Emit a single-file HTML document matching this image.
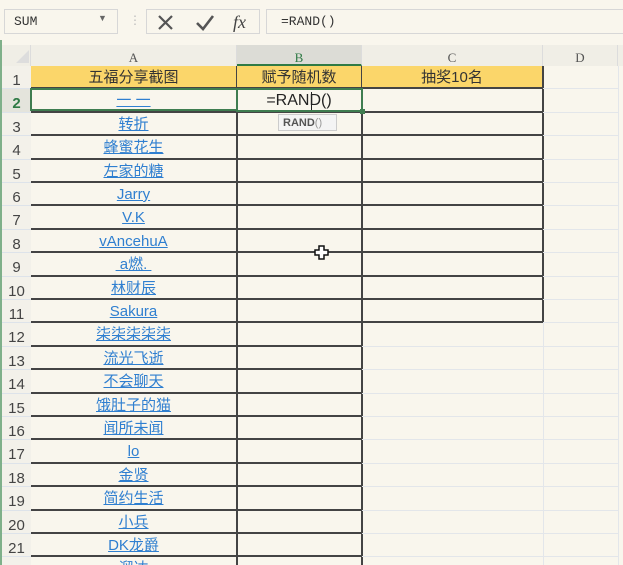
<!DOCTYPE html>
<html><head><meta charset="utf-8"><style>
html,body{margin:0;width:623px;height:565px;overflow:hidden}
body{background:#f9f6ed;font-family:"Liberation Sans","Noto Sans CJK SC",sans-serif;position:relative}
.box{position:absolute;top:9px;height:25px;border:1px solid #d7d7d7;background:#f9f6ed;box-sizing:border-box}
.mono{font-family:"Liberation Mono","Noto Sans CJK SC",monospace;font-size:13px;color:#333}
#grid{position:absolute;left:0;top:45px;width:623px}
.hdr{position:absolute;top:0;height:21px;background:#f0eee6;border-right:1px solid #dcdcdc;box-sizing:border-box;text-align:center;font-family:"Liberation Serif",serif;font-size:13px;color:#555;line-height:26px}
.row{position:absolute;left:0;width:623px;height:23.4px}
.rn{position:absolute;left:2px;width:29px;height:100%;text-align:center;color:#444;font-size:15px;line-height:29px;border-bottom:1px solid #dde3ea;box-sizing:border-box;background:#f3f1ea}
.c{position:absolute;top:0;height:100%;box-sizing:border-box;text-align:center;font-size:15px;line-height:24px}
.a{left:31px;width:207px;border-bottom:2px solid #444;border-right:2px solid #444}
.b{left:237px;width:126px;border-bottom:2px solid #444;border-right:2px solid #444}
.cc{left:362px;width:182px;border-bottom:2px solid #444;border-right:2px solid #444}
.cl{left:362px;width:182px;border-bottom:1px solid #e3e6ea;border-right:1px solid #e3e6ea}
.d{left:543px;width:76px;border-bottom:1px solid #e3e6ea;border-right:1px solid #e3e6ea}
.y{background:#fbd66a;color:#333}
.l{color:#2f7fd0;text-decoration:underline}
</style></head><body>
<div style="position:absolute;left:0;top:40px;width:2px;height:525px;background:#7fb08a"></div>
<div class="box" style="left:4px;width:114px"><span class="mono" style="position:absolute;left:9px;top:4px">SUM</span><span style="position:absolute;left:93px;top:3px;font-size:9px;color:#666">▼</span></div>
<div style="position:absolute;left:129px;top:13px;font-size:12px;color:#bbb">⋮</div>
<div class="box" style="left:146px;width:114px">
<svg width="114" height="25" style="position:absolute;left:0;top:0"><path d="M12 6 L25 19 M25 6 L12 19" stroke="#555" stroke-width="2.2"/><path d="M50 13 L56 19 L66 6" stroke="#555" stroke-width="2.6" fill="none"/><text x="86" y="18" font-family="Liberation Serif" font-style="italic" font-size="18" fill="#444">fx</text></svg></div>
<div class="box" style="left:266px;width:360px"><span class="mono" style="position:absolute;left:14px;top:4px">=RAND()</span></div>
<div id="grid">
<div class="hdr" style="left:2px;width:29px"><svg width="29" height="21"><path d="M14 18 L27 18 L27 5Z" fill="#ddd"/></svg></div>
<div class="hdr" style="left:31px;width:206px">A</div>
<div class="hdr" style="left:237px;width:125px;background:#dcdcd6;color:#2f7a45;border-bottom:2px solid #2f7a45">B</div>
<div class="hdr" style="left:362px;width:181px">C</div>
<div class="hdr" style="left:543px;width:75px">D</div>
<div class="hdr" style="left:618px;width:10px"></div>
</div>
<div id="rows" style="position:absolute;left:0;top:66px">
<div class="row" style="top:0"><div class="rn">1</div><div class="c a y">五福分享截图</div><div class="c b y">赋予随机数</div><div class="c cc y">抽奖10名</div><div class="c d"></div></div>
<div class="row" style="top:23.4px"><div class="rn" style="color:#2f7a45;font-weight:bold;background:#e4e4dc">2</div><div class="c a l">一 一</div><div class="c b" style="font-size:16px;color:#222">=RAND()</div><div class="c cc"></div><div class="c d"></div></div>
<div class="row" style="top:46.8px"><div class="rn">3</div><div class="c a l">转折</div><div class="c b"></div><div class="c cc"></div><div class="c d"></div></div>
<div class="row" style="top:70.2px"><div class="rn">4</div><div class="c a l">蜂蜜花生</div><div class="c b"></div><div class="c cc"></div><div class="c d"></div></div>
<div class="row" style="top:93.6px"><div class="rn">5</div><div class="c a l">左家的糖</div><div class="c b"></div><div class="c cc"></div><div class="c d"></div></div>
<div class="row" style="top:117px"><div class="rn">6</div><div class="c a l">Jarry</div><div class="c b"></div><div class="c cc"></div><div class="c d"></div></div>
<div class="row" style="top:140.4px"><div class="rn">7</div><div class="c a l">V.K</div><div class="c b"></div><div class="c cc"></div><div class="c d"></div></div>
<div class="row" style="top:163.8px"><div class="rn">8</div><div class="c a l">vAncehuA</div><div class="c b"></div><div class="c cc"></div><div class="c d"></div></div>
<div class="row" style="top:187.2px"><div class="rn">9</div><div class="c a l">&nbsp;a燃.&nbsp;</div><div class="c b"></div><div class="c cc"></div><div class="c d"></div></div>
<div class="row" style="top:210.6px"><div class="rn">10</div><div class="c a l">林财辰</div><div class="c b"></div><div class="c cc"></div><div class="c d"></div></div>
<div class="row" style="top:234px"><div class="rn">11</div><div class="c a l">Sakura</div><div class="c b"></div><div class="c cc"></div><div class="c d"></div></div>
<div class="row" style="top:257.4px"><div class="rn">12</div><div class="c a l">柒柒柒柒柒</div><div class="c b"></div><div class="c cl"></div><div class="c d"></div></div>
<div class="row" style="top:280.8px"><div class="rn">13</div><div class="c a l">流光飞逝</div><div class="c b"></div><div class="c cl"></div><div class="c d"></div></div>
<div class="row" style="top:304.2px"><div class="rn">14</div><div class="c a l">不会聊天</div><div class="c b"></div><div class="c cl"></div><div class="c d"></div></div>
<div class="row" style="top:327.6px"><div class="rn">15</div><div class="c a l">饿肚子的猫</div><div class="c b"></div><div class="c cl"></div><div class="c d"></div></div>
<div class="row" style="top:351px"><div class="rn">16</div><div class="c a l">闻所未闻</div><div class="c b"></div><div class="c cl"></div><div class="c d"></div></div>
<div class="row" style="top:374.4px"><div class="rn">17</div><div class="c a l">lo</div><div class="c b"></div><div class="c cl"></div><div class="c d"></div></div>
<div class="row" style="top:397.8px"><div class="rn">18</div><div class="c a l">金贤</div><div class="c b"></div><div class="c cl"></div><div class="c d"></div></div>
<div class="row" style="top:421.2px"><div class="rn">19</div><div class="c a l">简约生活</div><div class="c b"></div><div class="c cl"></div><div class="c d"></div></div>
<div class="row" style="top:444.6px"><div class="rn">20</div><div class="c a l">小兵</div><div class="c b"></div><div class="c cl"></div><div class="c d"></div></div>
<div class="row" style="top:468px"><div class="rn">21</div><div class="c a l">DK龙爵</div><div class="c b"></div><div class="c cl"></div><div class="c d"></div></div>
<div class="row" style="top:491.4px"><div class="rn">22</div><div class="c a l">溜达</div><div class="c b"></div><div class="c cl"></div><div class="c d"></div></div>
</div>
<div style="position:absolute;left:30px;top:88px;width:208px;height:23px;border:2px solid #3f7d50;box-sizing:border-box"></div>
<div style="position:absolute;left:236px;top:88px;width:127px;height:24px;border:2px solid #3f7d50;box-sizing:border-box"></div>
<div style="position:absolute;left:360px;top:109px;width:5px;height:5px;background:#3f7d50"></div>
<div style="position:absolute;left:311px;top:92px;width:1px;height:18px;background:#222"></div>
<div style="position:absolute;left:278px;top:114px;width:59px;height:17px;border:1px solid #ccc;background:#f4f4f4;font-size:11px;line-height:16px;padding-left:4px;box-sizing:border-box;color:#555"><b>RAND</b><span style="color:#999">()</span></div>
<svg style="position:absolute;left:313px;top:245px" width="18" height="16"><path d="M6 1h5v4h4v5h-4v4h-5v-4h-4v-5h4z" fill="#fff" stroke="#111" stroke-width="1.5"/></svg>
</body></html>
